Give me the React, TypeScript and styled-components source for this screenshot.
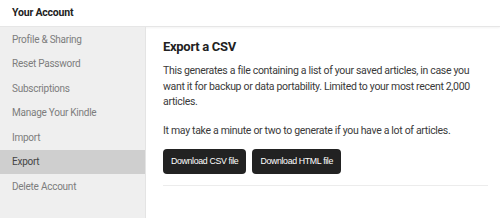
import React from "react";
import styled, { createGlobalStyle } from "styled-components";

const GlobalStyle = createGlobalStyle`
  html, body {
    margin: 0;
    padding: 0;
    background: #ffffff;
  }
  body {
    font-family: Roboto, "Liberation Sans", sans-serif;
  }
  * {
    box-sizing: border-box;
  }
`;

const Page = styled.div`
  width: 500px;
  height: 218px;
  display: flex;
  flex-direction: column;
  overflow: hidden;
`;

const Header = styled.header`
  height: 27px;
  flex-shrink: 0;
  display: flex;
  align-items: center;
  padding: 0 12px 2px;
  border-bottom: 1px solid #e6e6e6;
  box-shadow: 0 1px 2px rgba(0, 0, 0, 0.05);
  font-size: 10.5px;
  font-weight: 700;
  color: #222;
  letter-spacing: -0.2px;
`;

const Body = styled.div`
  flex: 1;
  display: flex;
`;

const Sidebar = styled.nav`
  width: 146px;
  flex-shrink: 0;
  background: #efefef;
  border-right: 1px solid #e4e4e4;
  display: flex;
  flex-direction: column;
`;

const NavItem = styled.div<{ $active?: boolean }>`
  height: 24.5px;
  display: flex;
  align-items: center;
  padding: 0 12px;
  font-size: 10px;
  color: ${(p) => (p.$active ? "#444" : "#7d7d7d")};
  background: ${(p) => (p.$active ? "#cfcfcf" : "transparent")};
  letter-spacing: -0.25px;
`;

const Main = styled.main`
  flex: 1;
  padding: 10px 12px 0 17px;
`;

const Title = styled.h2`
  margin: 0 0 6px;
  font-size: 13px;
  font-weight: 700;
  color: #222;
  letter-spacing: -0.3px;
  line-height: 20px;
`;

const Paragraph = styled.p`
  margin: 0;
  font-size: 10.5px;
  line-height: 15.5px;
  color: #3a3a3a;
  letter-spacing: -0.32px;
  width: 325px;

  & + & {
    margin-top: 13px;
  }
`;

const Buttons = styled.div`
  display: flex;
  gap: 6px;
  margin-top: 11px;
  padding-bottom: 11.5px;
  border-bottom: 1px solid #ececec;
  width: 325px;
`;

const Button = styled.button`
  height: 24.5px;
  padding: 0 8px;
  border: none;
  border-radius: 4px;
  background: #222222;
  color: #fff;
  font-family: "Liberation Sans", Arial, sans-serif;
  font-size: 8.8px;
  letter-spacing: -0.35px;
  cursor: pointer;
`;

const navItems = [
  "Profile & Sharing",
  "Reset Password",
  "Subscriptions",
  "Manage Your Kindle",
  "Import",
  "Export",
  "Delete Account",
];

export default function App() {
  return (
    <>
      <GlobalStyle />
      <Page>
        <Header>Your Account</Header>
        <Body>
          <Sidebar>
            {navItems.map((item) => (
              <NavItem key={item} $active={item === "Export"}>
                {item}
              </NavItem>
            ))}
          </Sidebar>
          <Main>
            <Title>Export a CSV</Title>
            <Paragraph>
              This generates a file containing a list of your saved articles, in
              case you want it for backup or data portability. Limited to your
              most recent 2,000 articles.
            </Paragraph>
            <Paragraph>
              It may take a minute or two to generate if you have a lot of
              articles.
            </Paragraph>
            <Buttons>
              <Button>Download CSV file</Button>
              <Button>Download HTML file</Button>
            </Buttons>
          </Main>
        </Body>
      </Page>
    </>
  );
}
